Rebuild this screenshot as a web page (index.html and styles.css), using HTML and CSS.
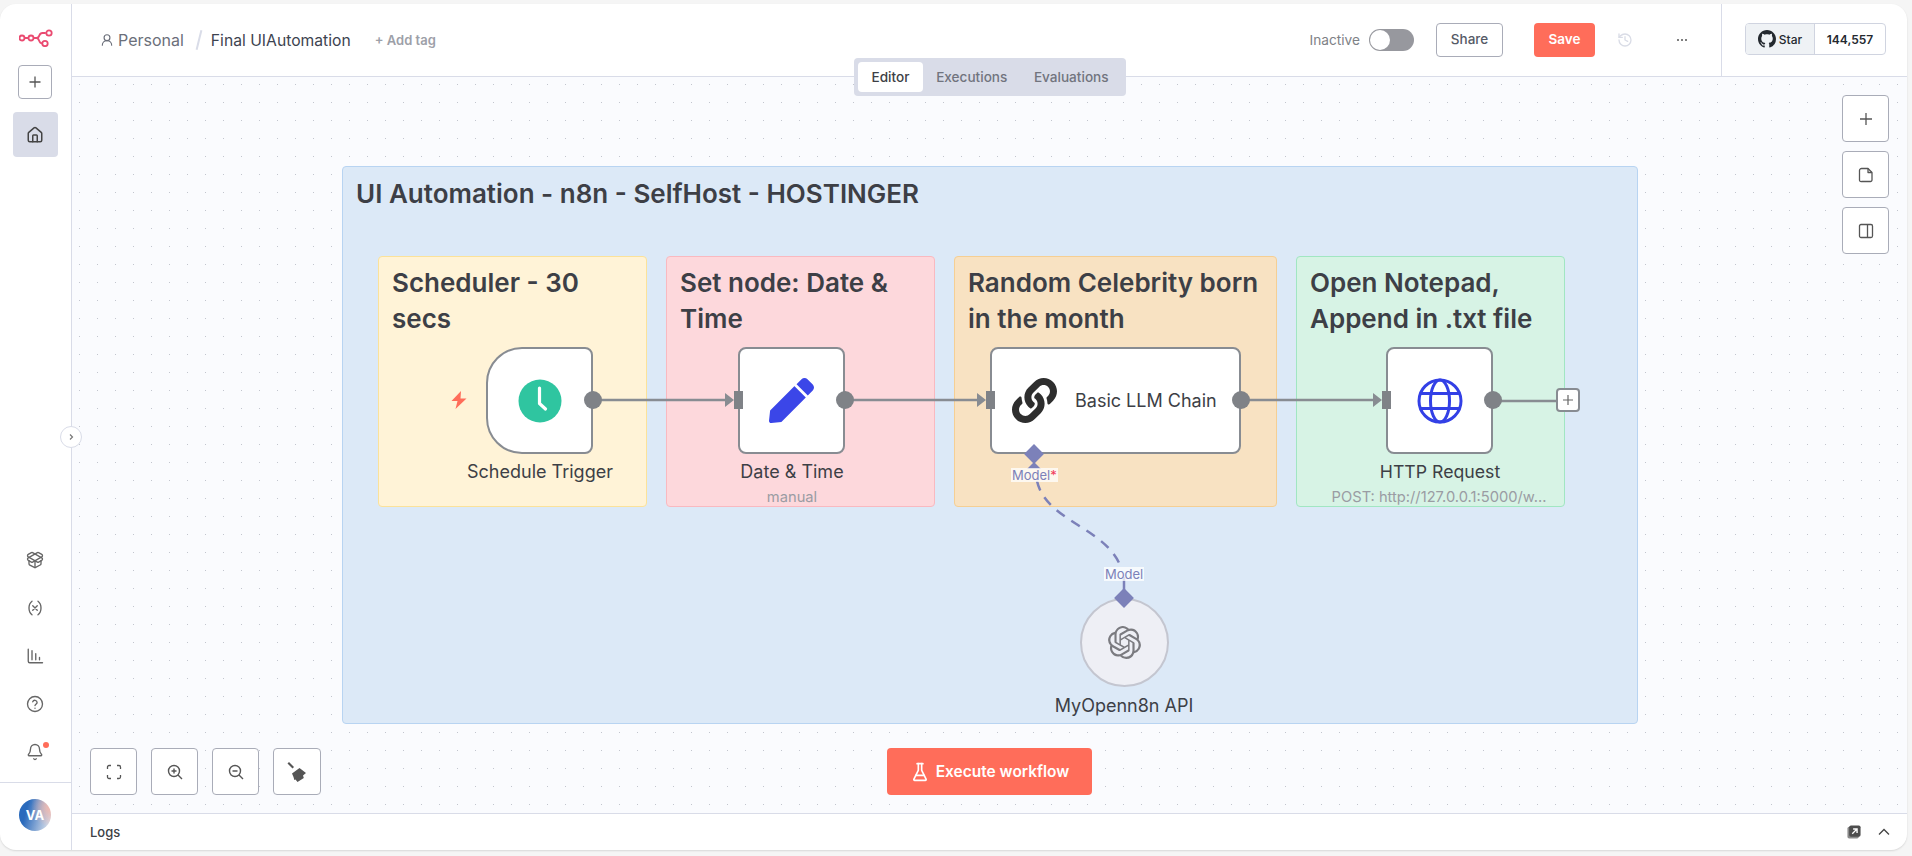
FILE: index.html
```html
<!DOCTYPE html>
<html lang="en">
<head>
  <meta charset="UTF-8">
  <meta name="viewport" content="width=device-width, initial-scale=1.0">
  <title>Final UIAutomation - n8n</title>
  <link rel="stylesheet" href="styles.css">
</head>
<body>
  <div class="window">
    <aside class="sidebar">
      <svg class="logo" viewBox="0 0 34 18" width="34" height="18" fill="none" stroke="#ea4b71" stroke-width="1.800">
        <circle cx="3" cy="9" r="2.500"/>
        <circle cx="12" cy="9" r="2.500"/>
        <circle cx="30" cy="4" r="2.700"/>
        <circle cx="26" cy="14.500" r="2.700"/>
        <path d="M5.500 9h4M14.500 9h3c4 0 1.500-5 6-5h3.300M17.500 9c3.500 0 1.500 5.500 5.800 5.500"/>
      </svg>
      <button class="add-btn">
        <svg viewBox="0 0 16 16" width="16" height="16" fill="none" stroke="#555" stroke-width="1.300"><path d="M8 2.500v11M2.500 8h11"/></svg>
      </button>
      <div class="home-btn">
        <svg viewBox="0 0 24 24" width="18" height="18" fill="none" stroke="#444" stroke-width="2" stroke-linecap="round" stroke-linejoin="round"><path d="M15 21v-8a1 1 0 0 0-1-1h-4a1 1 0 0 0-1 1v8"/><path d="M3 10a2 2 0 0 1 .709-1.528l7-5.999a2 2 0 0 1 2.582 0l7 5.999A2 2 0 0 1 21 10v9a2 2 0 0 1-2 2H5a2 2 0 0 1-2-2z"/></svg>
      </div>
      <div class="side-icons">
        <svg viewBox="0 0 24 24" width="18" height="18" fill="none" stroke="#666" stroke-width="1.800" stroke-linecap="round" stroke-linejoin="round"><path d="M12 22v-9"/><path d="M15.170 2.210a1.670 1.670 0 0 1 1.630 0L21 4.570a1.930 1.930 0 0 1 0 3.360L8.820 14.790a1.655 1.655 0 0 1-1.640 0L3 12.430a1.930 1.930 0 0 1 0-3.360z"/><path d="M20 13v3.870a2.060 2.060 0 0 1-1.110 1.830l-6 3.080a1.930 1.930 0 0 1-1.780 0l-6-3.080A2.060 2.060 0 0 1 4 16.870V13"/><path d="M21 12.430a1.930 1.930 0 0 0 0-3.360L8.830 2.200a1.640 1.640 0 0 0-1.630 0L3 4.570a1.930 1.930 0 0 0 0 3.360l12.180 6.860a1.636 1.636 0 0 0 1.630 0z"/></svg>
        <svg viewBox="0 0 24 24" width="18" height="18" fill="none" stroke="#666" stroke-width="1.800" stroke-linecap="round" stroke-linejoin="round"><path d="M8 21s-4-3-4-9 4-9 4-9"/><path d="M16 3s4 3 4 9-4 9-4 9"/><path d="M15 9l-6 6M9 9l6 6"/></svg>
        <svg viewBox="0 0 24 24" width="18" height="18" fill="none" stroke="#666" stroke-width="1.800" stroke-linecap="round"><path d="M3 3v16a2 2 0 0 0 2 2h17M8 5v12M13 9v8M18 14v3"/></svg>
        <svg viewBox="0 0 24 24" width="18" height="18" fill="none" stroke="#666" stroke-width="1.800" stroke-linecap="round"><circle cx="12" cy="12" r="10"/><path d="M9 9a3 3 0 0 1 5.800 1c0 2-2.800 2.500-2.800 4M12 17.500v.1"/></svg>
        <div class="bell">
          <svg viewBox="0 0 24 24" width="18" height="18" fill="none" stroke="#666" stroke-width="1.800" stroke-linecap="round" stroke-linejoin="round"><path d="M10.268 21a2 2 0 0 0 3.464 0"/><path d="M3.262 15.326A1 1 0 0 0 4 17h16a1 1 0 0 0 .74-1.673C19.410 13.956 18 12.499 18 8A6 6 0 0 0 6 8c0 4.499-1.411 5.956-2.738 7.326"/></svg>
          <span class="bell-dot"></span>
        </div>
      </div>
      <div class="side-foot">
        <div class="avatar">VA</div>
      </div>
    </aside>

    <div class="main">
      <header class="topbar">
        <div class="crumbs">
          <svg viewBox="0 0 24 24" width="14" height="14" fill="none" stroke="#6b6f7a" stroke-width="2" stroke-linecap="round"><circle cx="12" cy="8" r="5"/><path d="M20 21a8 8 0 0 0-16 0"/></svg>
          <span class="crumb-project">Personal</span>
          <span class="crumb-slash"></span>
          <span class="crumb-name">Final UIAutomation</span>
          <span class="add-tag">+ Add tag</span>
        </div>
        <div class="actions">
          <span class="state-label">Inactive</span>
          <span class="toggle"><span class="knob"></span></span>
          <button class="btn share">Share</button>
          <button class="btn save">Save</button>
          <svg class="history" viewBox="0 0 24 24" width="16" height="16" fill="none" stroke="#d9dce6" stroke-width="2" stroke-linecap="round" stroke-linejoin="round"><path d="M3 12a9 9 0 1 0 9-9 9.750 9.750 0 0 0-6.740 2.740L3 8"/><path d="M3 3v5h5M12 7v5l4 2"/></svg>
          <span class="more"><i></i><i></i><i></i></span>
        </div>
        <div class="github">
          <div class="star-box">
            <span class="star-btn">
              <svg viewBox="0 0 16 16" width="18" height="18" fill="#24292f"><path d="M8 0C3.580 0 0 3.580 0 8c0 3.540 2.290 6.530 5.470 7.590.4.070.55-.17.55-.38 0-.19-.01-.82-.01-1.490-2.010.37-2.530-.49-2.690-.94-.09-.23-.48-.94-.82-1.130-.28-.15-.68-.52-.01-.53.630-.01 1.080.58 1.230.82.720 1.210 1.870.87 2.330.66.070-.52.280-.87.510-1.070-1.780-.2-3.640-.89-3.640-3.950 0-.87.310-1.590.82-2.150-.08-.2-.36-1.020.08-2.120 0 0 .67-.21 2.200.82.640-.18 1.320-.27 2-.27s1.360.09 2 .27c1.530-1.040 2.200-.82 2.200-.82.440 1.100.16 1.920.08 2.120.51.560.82 1.270.82 2.150 0 3.070-1.870 3.750-3.650 3.950.29.250.54.730.54 1.480 0 1.070-.01 1.930-.01 2.200 0 .21.150.46.550.38A8.010 8.010 0 0 0 16 8c0-4.420-3.580-8-8-8z"/></svg>
              Star
            </span>
            <span class="star-count">144,557</span>
          </div>
        </div>
      </header>

      <section class="canvas">
        <div class="tabs">
          <span class="tab active">Editor</span>
          <span class="tab">Executions</span>
          <span class="tab">Evaluations</span>
        </div>

        <button class="collapse">
          <svg viewBox="0 0 10 10" width="10" height="10" fill="none" stroke="#777" stroke-width="1.200"><path d="M4 2.500L6.500 5 4 7.500"/></svg>
        </button>

        <div class="sticky main-note">UI Automation - n8n - SelfHost - HOSTINGER</div>
        <div class="sticky note note-yellow">Scheduler - 30 secs</div>
        <div class="sticky note note-pink">Set node: Date &amp; Time</div>
        <div class="sticky note note-orange">Random Celebrity born in the month</div>
        <div class="sticky note note-green">Open Notepad, Append in .txt file</div>

        <svg class="wires" viewBox="0 0 1835 736" width="1835" height="736" fill="none">
          <g stroke="#888c92" stroke-width="2.500">
            <path d="M521 323H654"/>
            <path d="M773 323H906"/>
            <path d="M1169 323H1302"/>
            <path d="M1421 324H1486"/>
          </g>
          <g fill="#888c92">
            <path d="M653 316l9 7-9 7z"/>
            <path d="M905 316l9 7-9 7z"/>
            <path d="M1301 316l9 7-9 7z"/>
          </g>
          <path d="M965 404C974 444 1032 450 1048 488" stroke="#7c81b9" stroke-width="2.500" stroke-dasharray="10 8"/>
          <path d="M1052 500v14" stroke="#7c81b9" stroke-width="2.500"/>
        </svg>

        <div class="node trigger node-schedule">
          <svg viewBox="0 0 44 44" width="44" height="44"><circle cx="22" cy="22" r="21.500" fill="#2fc5a0"/><path d="M21.500 9v15.500l6 5.500" fill="none" stroke="#fff" stroke-width="3.200" stroke-linecap="round" stroke-linejoin="round"/></svg>
        </div>
        <svg class="bolt" viewBox="0 0 16 18" width="16" height="18" fill="#ff6d5a"><path d="M10 0L0.500 10H6.500L4.500 18 15.500 7.500H9.500z"/></svg>
        <div class="node node-date">
          <svg viewBox="0 0 512 512" width="45" height="45" fill="#3b46e8"><path d="M290.740 93.240l128.020 128.020-277.990 277.990-114.140 12.600C11.350 513.540-1.560 500.620.140 485.340l12.700-114.220 277.900-278.880zm207.200-19.060l-60.110-60.110c-18.750-18.750-49.160-18.750-67.910 0l-56.550 56.550 128.020 128.020 56.550-56.550c18.750-18.760 18.750-49.160 0-67.910z"/></svg>
        </div>
        <div class="node node-llm">
          <svg class="llm-icon" viewBox="0 0 512 512" width="45" height="45" fill="#2e2e2e"><path d="M326.612 185.391c59.747 59.809 58.927 155.698.36 214.590-.11.120-.24.250-.36.370l-67.200 67.200c-59.270 59.270-155.699 59.262-214.960 0-59.270-59.260-59.270-155.700 0-214.960l37.106-37.106c9.840-9.840 26.786-3.300 27.294 10.606.648 17.722 3.826 35.527 9.690 52.721 1.986 5.822.567 12.262-3.783 16.612l-13.087 13.087c-28.026 28.026-28.905 73.660-1.155 101.960 28.024 28.579 74.086 28.749 102.325.510l67.200-67.190c28.191-28.191 28.073-73.757 0-101.830-3.701-3.694-7.429-6.564-10.341-8.569a16.037 16.037 0 0 1-6.947-12.606c-.396-10.567 3.348-21.456 11.698-29.806l21.054-21.055c5.521-5.521 14.182-6.199 20.584-1.731a152.482 152.482 0 0 1 20.522 17.197zM467.547 44.449c-59.261-59.262-155.690-59.270-214.960 0l-67.200 67.200c-.12.120-.25.250-.36.370-58.566 58.892-59.387 154.781.36 214.590a152.454 152.454 0 0 0 20.521 17.196c6.402 4.468 15.064 3.789 20.584-1.731l21.054-21.055c8.350-8.350 12.094-19.239 11.698-29.806a16.037 16.037 0 0 0-6.947-12.606c-2.912-2.005-6.640-4.875-10.341-8.569-28.073-28.073-28.191-73.639 0-101.830l67.200-67.190c28.239-28.239 74.300-28.069 102.325.510 27.750 28.300 26.872 73.934-1.155 101.960l-13.087 13.087c-4.350 4.350-5.769 10.790-3.783 16.612 5.864 17.194 9.042 34.999 9.690 52.721.509 13.906 17.454 20.446 27.294 10.606l37.106-37.106c59.271-59.259 59.271-155.699.001-214.959z"/></svg>
          <span class="llm-name">Basic LLM Chain</span>
        </div>
        <div class="node node-http">
          <svg viewBox="0 0 46 46" width="46" height="46" fill="none" stroke="#3340e6" stroke-width="3"><circle cx="23" cy="23" r="21"/><ellipse cx="23" cy="23" rx="9.500" ry="21"/><path d="M4 15.500h38M4 30.500h38"/></svg>
        </div>

        <div class="node round node-api">
          <svg viewBox="0 0 24 24" width="33" height="33" fill="#7b7b80"><path d="M22.282 9.821a5.985 5.985 0 0 0-.516-4.911 6.046 6.046 0 0 0-6.510-2.900A6.065 6.065 0 0 0 4.981 4.182a5.985 5.985 0 0 0-3.998 2.900 6.046 6.046 0 0 0 .743 7.097 5.980 5.980 0 0 0 .511 4.911 6.051 6.051 0 0 0 6.515 2.900A5.985 5.985 0 0 0 13.260 24a6.056 6.056 0 0 0 5.772-4.206 5.990 5.990 0 0 0 3.997-2.900 6.056 6.056 0 0 0-.747-7.073zM13.260 22.430a4.476 4.476 0 0 1-2.876-1.041l.142-.080 4.778-2.758a.795.795 0 0 0 .393-.681v-6.737l2.020 1.169a.071.071 0 0 1 .038.052v5.583a4.504 4.504 0 0 1-4.495 4.493zm-9.661-4.125a4.471 4.471 0 0 1-.535-3.014l.142.085 4.783 2.758a.771.771 0 0 0 .781 0l5.843-3.369v2.332a.080.080 0 0 1-.033.062L9.740 19.950a4.499 4.499 0 0 1-6.141-1.646zM2.341 7.896a4.485 4.485 0 0 1 2.366-1.973V11.600a.766.766 0 0 0 .388.677l5.814 3.354-2.020 1.169a.076.076 0 0 1-.071 0l-4.830-2.787A4.504 4.504 0 0 1 2.341 7.872zm16.596 3.855L13.104 8.364 15.119 7.200a.076.076 0 0 1 .071 0l4.830 2.791a4.494 4.494 0 0 1-.676 8.105v-5.678a.790.790 0 0 0-.407-.667zm2.011-3.023l-.142-.085-4.774-2.782a.776.776 0 0 0-.785 0L9.409 9.230V6.897a.066.066 0 0 1 .028-.061l4.830-2.787a4.499 4.499 0 0 1 6.680 4.660zM8.307 12.863l-2.020-1.164a.080.080 0 0 1-.038-.057V6.074a4.499 4.499 0 0 1 7.376-3.454l-.142.081L8.704 5.459a.795.795 0 0 0-.393.681zm1.097-2.365l2.602-1.500 2.607 1.500v2.999l-2.597 1.500-2.607-1.500z"/></svg>
        </div>

        <span class="port port-out" style="left:512px;top:314px"></span>
        <span class="port port-out" style="left:764px;top:314px"></span>
        <span class="port port-out" style="left:1160px;top:314px"></span>
        <span class="port port-out" style="left:1412px;top:314px"></span>
        <span class="port port-in" style="left:662px;top:314px"></span>
        <span class="port port-in" style="left:914px;top:314px"></span>
        <span class="port port-in" style="left:1310px;top:314px"></span>
        <span class="plus-box">
          <svg viewBox="0 0 14 14" width="14" height="14" fill="none" stroke="#666" stroke-width="1.200"><path d="M7 2v10M2 7h10"/></svg>
        </span>

        <span class="diamond" style="left:955px;top:370px"></span>
        <span class="diamond" style="left:1045px;top:514px"></span>
        <span class="tip"></span>
        <span class="port-label label-model-in">Model<em>*</em></span>
        <span class="port-label label-model-out">Model</span>

        <span class="node-title title-schedule">Schedule Trigger</span>
        <span class="node-title title-date">Date &amp; Time</span>
        <span class="node-sub sub-date">manual</span>
        <span class="node-title title-http">HTTP Request</span>
        <span class="node-sub sub-http">POST: http://127.0.0.1:5000/w...</span>
        <span class="node-title title-api">MyOpenn8n API</span>

        <div class="side-tools">
          <button class="tool">
            <svg viewBox="0 0 16 16" width="16" height="16" fill="none" stroke="#555" stroke-width="1.300"><path d="M8 2v12M2 8h12"/></svg>
          </button>
          <button class="tool">
            <svg viewBox="0 0 16 16" width="16" height="16" fill="none" stroke="#555" stroke-width="1.300" stroke-linejoin="round"><path d="M3.500 1.500h6.500l4 4v7.500a1.500 1.500 0 0 1-1.500 1.500h-9A1.500 1.500 0 0 1 1.500 13V3.500a2 2 0 0 1 2-2z"/><path d="M10 1.500v4h4"/></svg>
          </button>
          <button class="tool">
            <svg viewBox="0 0 16 16" width="16" height="16" fill="none" stroke="#555" stroke-width="1.300"><rect x="1.500" y="1.500" width="13" height="13" rx="1.500"/><path d="M9.500 1.500v13"/></svg>
          </button>
        </div>

        <div class="zoom-tools">
          <button class="tool">
            <svg viewBox="0 0 16 16" width="16" height="16" fill="none" stroke="#555" stroke-width="1.300"><path d="M1.500 5V3a1.500 1.500 0 0 1 1.500-1.500h2M11 1.500h2A1.500 1.500 0 0 1 14.500 3v2M14.500 11v2a1.500 1.500 0 0 1-1.500 1.500h-2M5 14.500H3A1.500 1.500 0 0 1 1.500 13v-2"/></svg>
          </button>
          <button class="tool">
            <svg viewBox="0 0 16 16" width="16" height="16" fill="none" stroke="#555" stroke-width="1.400"><circle cx="7" cy="7" r="5.500"/><path d="M11 11l4 4M7 4.500v5M4.500 7h5"/></svg>
          </button>
          <button class="tool">
            <svg viewBox="0 0 16 16" width="16" height="16" fill="none" stroke="#555" stroke-width="1.400"><circle cx="7" cy="7" r="5.500"/><path d="M11 11l4 4M4.500 7h5"/></svg>
          </button>
          <button class="tool broom">
            <svg viewBox="0 0 20 20" width="20" height="20" fill="#555"><path d="M0.500 1.500L2 0l5 5-1.500 1.500z"/><path d="M5 11.500L12.500 6l6.500 5-3 2.500.8 2.500-6.300 4-2-2.500-1.200.6-.8-3z"/></svg>
          </button>
        </div>

        <button class="execute">
          <svg viewBox="0 0 24 24" width="20" height="20" fill="none" stroke="#fff" stroke-width="2" stroke-linecap="round" stroke-linejoin="round"><path d="M10 2v7.527a2 2 0 0 1-.211.896L4.720 20.550a1 1 0 0 0 .9 1.450h12.760a1 1 0 0 0 .9-1.450l-5.069-10.127A2 2 0 0 1 14 9.527V2"/><path d="M8.500 2h7M7 16h10"/></svg>
          Execute workflow
        </button>
      </section>

      <footer class="logs">
        <span class="logs-title">Logs</span>
        <div class="logs-actions">
          <svg viewBox="0 0 16 16" width="14" height="14"><rect x="0.500" y="2" width="13" height="13.500" rx="2" fill="#8a8a8a"/><rect x="2.500" y="0.500" width="13" height="13" rx="2" fill="#4d4d4d"/><path d="M6 10l5-5M7 4.500h4.500V9" fill="none" stroke="#fff" stroke-width="1.600"/></svg>
          <svg viewBox="0 0 12 8" width="12" height="8" fill="none" stroke="#444" stroke-width="1.300"><path d="M1 6.500L6 1.500l5 5"/></svg>
        </div>
      </footer>
    </div>
  </div>
</body>
</html>
```

FILE: styles.css
```css
* {
  box-sizing: border-box;
}
html, body {
  height: 100%;
}
body {
  margin: 0;
  padding: 4px 5px 6px 0;
  background: #f5f5f5;
  font-family: Inter, "Liberation Sans", sans-serif;
  color: #3d3f46;
  overflow: hidden;
}
button {
  font-family: inherit;
  cursor: pointer;
}

.window {
  display: flex;
  height: 100%;
  background: #fff;
  border-radius: 16px;
  overflow: hidden;
  box-shadow: 0 1px 2px rgba(0, 0, 0, 0.12);
}

/* left rail */
.sidebar {
  width: 72px;
  flex: none;
  display: flex;
  flex-direction: column;
  align-items: center;
  border-right: 1px solid #d9dce8;
}
.logo {
  flex: none;
  margin-top: 25px;
}
.add-btn {
  width: 34px;
  height: 34px;
  margin-top: 18px;
  margin-right: 1px;
  padding: 0;
  display: flex;
  align-items: center;
  justify-content: center;
  background: #fff;
  border: 1px solid #a9acb8;
  border-radius: 4px;
}
.home-btn {
  width: 45px;
  height: 45px;
  margin-top: 13px;
  margin-right: 1px;
  display: flex;
  align-items: center;
  justify-content: center;
  background: #d9dce8;
  border-radius: 4px;
}
.side-icons {
  margin-top: auto;
  padding-bottom: 21px;
  margin-right: 1px;
  display: flex;
  flex-direction: column;
  align-items: center;
  gap: 30px;
}
.bell {
  position: relative;
  height: 18px;
}
.bell-dot {
  position: absolute;
  right: -5px;
  top: -1px;
  width: 6px;
  height: 6px;
  border-radius: 50%;
  background: #ff6d5a;
}
.side-foot {
  width: 100%;
  height: 68px;
  display: flex;
  align-items: center;
  justify-content: center;
  border-top: 1px solid #d9dce8;
  padding: 0 1px 3px 0;
}
.avatar {
  width: 32px;
  height: 32px;
  border-radius: 50%;
  display: flex;
  align-items: center;
  justify-content: center;
  font-size: 13px;
  font-weight: 700;
  color: #fff;
  background: radial-gradient(circle at 100% 25%, #f4b8ac 0, transparent 50%), linear-gradient(105deg, #2a6abc 25%, #dfe3ec 95%);
}

.main {
  flex: 1;
  min-width: 0;
  display: flex;
  flex-direction: column;
}

/* top bar */
.topbar {
  height: 73px;
  flex: none;
  display: flex;
  align-items: center;
  border-bottom: 1px solid #d9dce8;
  font-size: 13px;
}
.crumbs {
  display: flex;
  align-items: center;
  padding-left: 28px;
  flex: 1;
}
.crumb-project {
  margin-left: 4px;
  font-size: 16px;
  color: #6b6f7a;
}
.crumb-slash {
  width: 2px;
  height: 20px;
  margin: 0 11px 0 14px;
  background: #d9dce8;
  transform: rotate(14deg);
}
.crumb-name {
  font-size: 15.700px;
  color: #3d4350;
}
.add-tag {
  margin-left: 24px;
  font-size: 13px;
  font-weight: 600;
  color: #9da0a8;
}
.actions {
  display: flex;
  align-items: center;
}
.state-label {
  font-size: 13.700px;
  color: #7e8186;
}
.toggle {
  width: 45px;
  height: 22px;
  margin-left: 9px;
  padding: 1px;
  border-radius: 11px;
  background: #97989e;
}
.knob {
  display: block;
  width: 20px;
  height: 20px;
  border-radius: 50%;
  background: #fff;
}
.btn {
  height: 34px;
  padding: 0 0 2px;
  font-size: 13.500px;
  border-radius: 4px;
}
.share {
  width: 67px;
  margin-left: 22px;
  background: #fff;
  border: 1px solid #a9acb8;
  color: #555a66;
  font-weight: 500;
}
.save {
  width: 61px;
  margin-left: 31px;
  background: #ff6d5a;
  border: 0;
  color: #fff;
  font-weight: 600;
}
.history {
  margin-left: 22px;
}
.more {
  display: flex;
  gap: 2px;
  margin: 0 34px 0 44px;
}
.more i {
  width: 2px;
  height: 2px;
  border-radius: 50%;
  background: #555;
}
.github {
  width: 186px;
  height: 100%;
  flex: none;
  display: flex;
  align-items: center;
  padding-left: 23px;
  border-left: 1px solid #d9dce8;
}
.star-box {
  display: flex;
  height: 32px;
  margin-top: -2px;
  border: 1px solid #d0d4e0;
  border-radius: 4px;
  overflow: hidden;
  font-size: 12px;
  font-weight: 600;
}
.star-btn {
  width: 69px;
  display: flex;
  align-items: center;
  justify-content: center;
  gap: 3px;
  background: #eff2f5;
  border-right: 1px solid #d0d4e0;
  color: #24292f;
  font-weight: 500;
}
.star-count {
  width: 70px;
  display: flex;
  align-items: center;
  justify-content: center;
  color: #24292f;
}

/* the workflow canvas, everything in here is placed on it */
.canvas {
  flex: 1;
  position: relative;
  background-color: #fafbfe;
  background-image: radial-gradient(circle at 7.500px 7.500px, #c2c5ce 0.7px, transparent 1px);
  background-size: 18px 18px;
}
.tabs {
  position: absolute;
  left: 782px;
  top: -19px;
  width: 272px;
  height: 38px;
  padding: 4px;
  display: flex;
  background: #d9dce8;
  border-radius: 4px;
  font-size: 13.600px;
  font-weight: 500;
  color: #71747e;
}
.tab {
  flex: 1;
  display: flex;
  align-items: center;
  justify-content: center;
  height: 30px;
  padding-right: 2px;
  border-radius: 4px;
}
.tab.active {
  flex: none;
  width: 65px;
  padding-right: 0;
  background: #fff;
  color: #3d3f46;
}
.collapse {
  position: absolute;
  left: -12px;
  top: 349px;
  width: 22px;
  height: 22px;
  padding: 0;
  display: flex;
  align-items: center;
  justify-content: center;
  background: #fff;
  border: 1px solid #d9dce8;
  border-radius: 50%;
}

.sticky {
  position: absolute;
  border: 1px solid;
  border-radius: 4px;
  font-weight: 600;
  color: #3d3f46;
}
.main-note {
  left: 270px;
  top: 89px;
  width: 1296px;
  height: 558px;
  padding: 9px 13px;
  background: #dce9f7;
  border-color: #b8d4f2;
  font-size: 26px;
  line-height: 36px;
}
.note {
  top: 179px;
  height: 251px;
  padding: 8px 13px;
  font-size: 26px;
  line-height: 36px;
}
.note-yellow {
  left: 306px;
  width: 269px;
  background: #fff3d7;
  border-color: #fbe29a;
}
.note-pink {
  left: 594px;
  width: 269px;
  background: #fdd8dc;
  border-color: #f9b9c0;
}
.note-orange {
  left: 882px;
  width: 323px;
  background: #f8e2c2;
  border-color: #f5cf94;
}
.note-green {
  left: 1224px;
  width: 269px;
  background: #d7f3e5;
  border-color: #a1e6c2;
}

.wires {
  position: absolute;
  left: 0;
  top: 0;
  z-index: 1;
  pointer-events: none;
}
.node {
  position: absolute;
  top: 270px;
  height: 107px;
  display: flex;
  align-items: center;
  justify-content: center;
  background: #fff;
  border: 2px solid #888c92;
  border-radius: 8px;
  z-index: 2;
}
.node-schedule {
  left: 414px;
  width: 107px;
  border-radius: 36px 8px 8px 36px;
}
.node-date {
  left: 666px;
  width: 107px;
}
.node-llm {
  left: 918px;
  width: 251px;
  justify-content: flex-start;
  padding-left: 20px;
}
.llm-icon {
  flex: none;
}
.llm-name {
  margin-left: 18px;
  font-size: 18px;
  white-space: nowrap;
}
.node-http {
  left: 1314px;
  width: 107px;
}
.node-api {
  left: 1008px;
  top: 521px;
  width: 89px;
  height: 89px;
  background: #eeeff5;
  border-color: #c4c6d0;
  border-radius: 50%;
}
.bolt {
  position: absolute;
  left: 379px;
  top: 314px;
  z-index: 2;
}
.port {
  position: absolute;
  z-index: 3;
}
.port-out {
  width: 18px;
  height: 18px;
  border-radius: 50%;
  background: #7f8287;
}
.port-in {
  width: 9px;
  height: 18px;
  background: #7f8287;
}
.plus-box {
  position: absolute;
  left: 1484px;
  top: 311px;
  width: 24px;
  height: 24px;
  display: flex;
  align-items: center;
  justify-content: center;
  background: #fff;
  border: 2px solid #888c92;
  border-radius: 4px;
  z-index: 3;
}
.diamond {
  position: absolute;
  width: 14px;
  height: 14px;
  background: #7c81b9;
  transform: rotate(45deg);
  z-index: 4;
}
.tip {
  position: absolute;
  left: 955px;
  top: 385px;
  width: 14px;
  height: 7px;
  background: #7c81b9;
  clip-path: polygon(50% 0, 100% 100%, 0 100%);
  z-index: 3;
}
.port-label {
  position: absolute;
  padding: 0 1px;
  font-size: 13px;
  line-height: 14px;
  color: #7c81b9;
  background: rgba(255, 255, 255, 0.75);
  z-index: 4;
}
.port-label em {
  font-style: normal;
  color: #f0395a;
}
.label-model-in {
  left: 939px;
  top: 391px;
}
.label-model-out {
  left: 1032px;
  top: 490px;
}
.node-title, .node-sub {
  position: absolute;
  transform: translateX(-50%);
  white-space: nowrap;
  z-index: 2;
}
.node-title {
  top: 385px;
  font-size: 18px;
  line-height: 20px;
}
.node-sub {
  top: 412px;
  font-size: 14.700px;
  line-height: 16px;
  color: #9a9ca3;
}
.title-schedule { left: 468px; }
.title-date { left: 720px; }
.sub-date { left: 720px; }
.title-http { left: 1368px; font-size: 17.700px; }
.sub-http { left: 1367px; }
.title-api { left: 1052px; top: 619px; }

/* floating tool buttons */
.tool {
  width: 47px;
  height: 47px;
  padding: 0;
  display: flex;
  align-items: center;
  justify-content: center;
  background: #fff;
  border: 1px solid #a9acb8;
  border-radius: 4px;
}
.side-tools {
  position: absolute;
  right: 18px;
  top: 18px;
  display: flex;
  flex-direction: column;
  gap: 9px;
}
.zoom-tools {
  position: absolute;
  left: 18px;
  top: 671px;
  display: flex;
  gap: 14px;
  z-index: 2;
}
.broom {
  width: 48px;
}
.execute {
  position: absolute;
  left: 815px;
  top: 671px;
  width: 205px;
  height: 47px;
  display: flex;
  align-items: center;
  justify-content: center;
  gap: 6px;
  background: #ff6d5a;
  border: 0;
  border-radius: 4px;
  color: #fff;
  font-size: 15.500px;
  font-weight: 600;
}

.logs {
  height: 37px;
  flex: none;
  display: flex;
  align-items: center;
  justify-content: space-between;
  padding: 0 17px 0 18px;
  border-top: 1px solid #d9dce8;
  font-size: 13px;
  font-weight: 500;
}
.logs-actions {
  display: flex;
  align-items: center;
  gap: 17px;
}
```
